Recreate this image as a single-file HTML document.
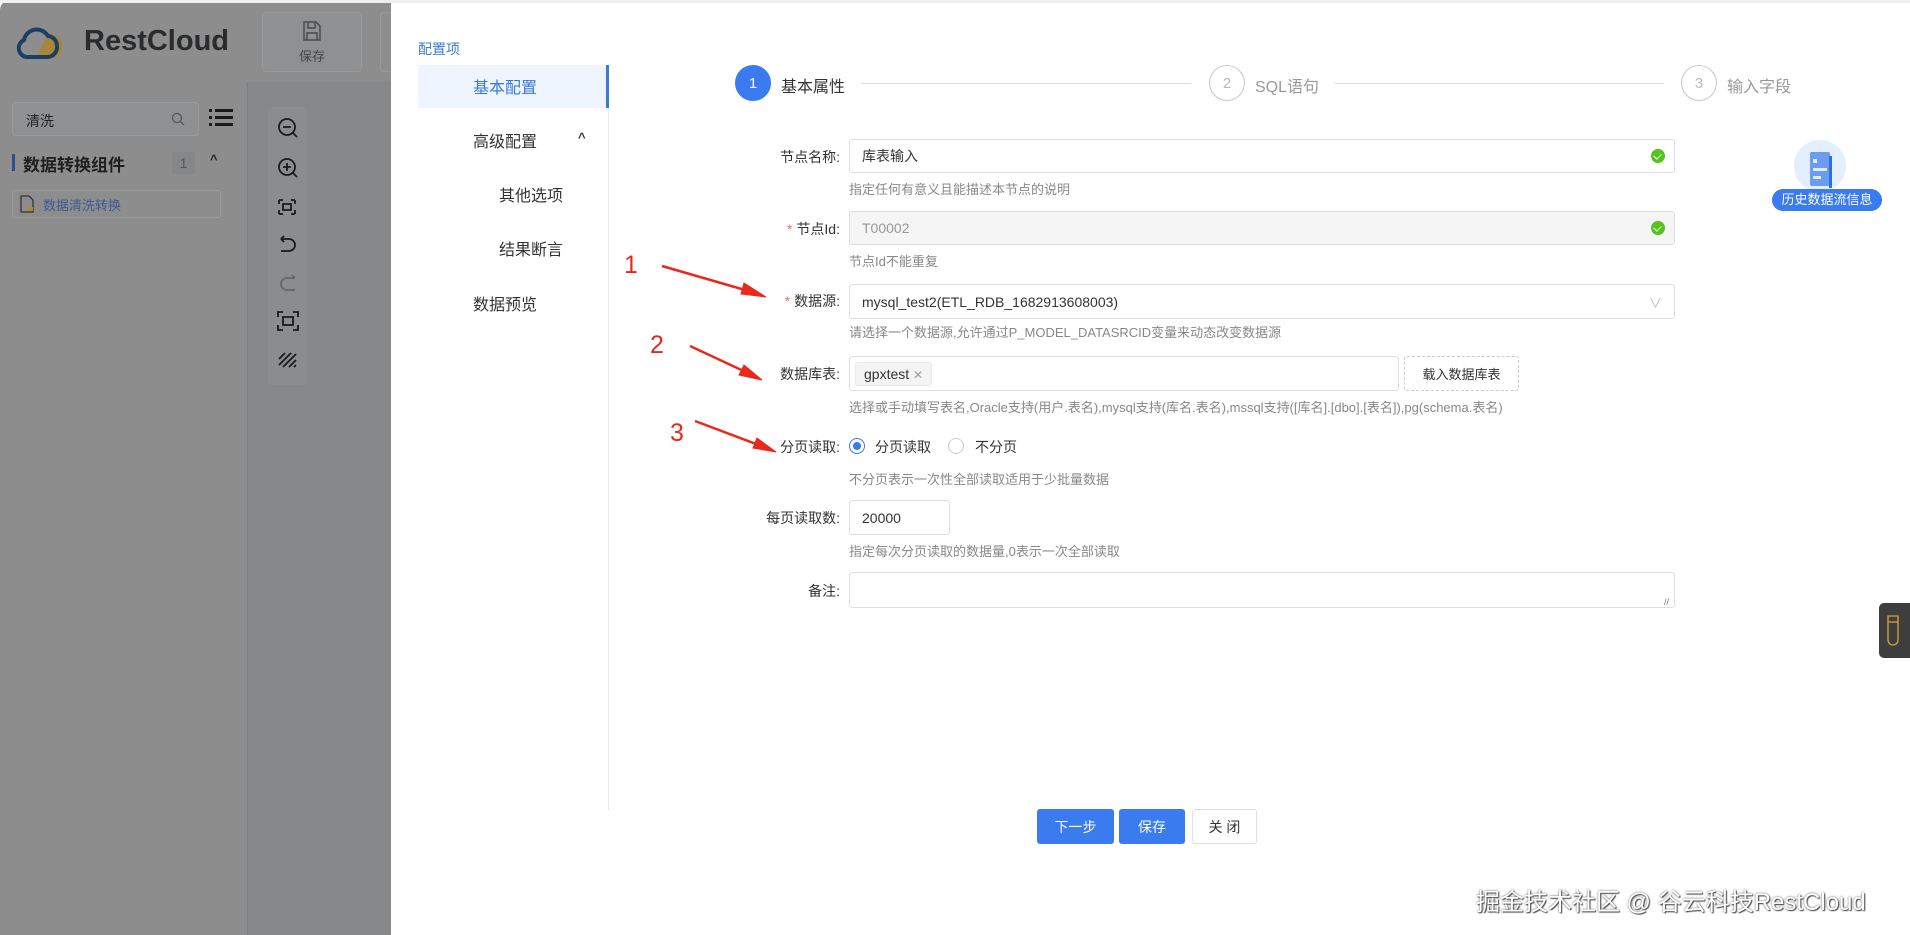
<!DOCTYPE html>
<html><head><meta charset="utf-8"><style>
*{margin:0;padding:0;box-sizing:border-box}
body{width:1910px;height:935px;overflow:hidden;position:relative;background:#fff;font-family:"Liberation Sans","Noto Sans CJK SC",sans-serif;color:#333}
.a{position:absolute}
.lbl{position:absolute;font-size:14px;color:#333;text-align:right;width:200px}
.inp{position:absolute;border:1px solid #dcdfe6;border-radius:3px;background:#fff;font-size:14px;color:#333;padding-left:12px;display:flex;align-items:center}
.hint{position:absolute;font-size:13px;color:#888;left:849px}
.star{color:#f56c6c;margin-right:4px}
.ok{position:absolute;right:9px;top:50%;margin-top:-7px;width:14px;height:14px;border-radius:50%;background:#52c41a}
.ok:after{content:"";position:absolute;left:4px;top:3px;width:4px;height:6px;border:solid #fff;border-width:0 1.5px 1.5px 0;transform:rotate(45deg)}
.menu{position:absolute;font-size:16px;color:#333}
.step{position:absolute;width:36px;height:36px;border-radius:50%;border:1px solid #c8c8c8;color:#bbb;font-size:15px;display:flex;align-items:center;justify-content:center}
.btn{position:absolute;height:35px;border-radius:3px;font-size:14px;display:flex;align-items:center;justify-content:center}
</style></head><body>
<div class="a" style="left:0;top:0;width:391px;height:935px;background:#8d8d8e;border-top-left-radius:10px"></div>
<div class="a" style="left:0;top:0;width:1910px;height:3px;background:#eee"></div>
<div class="a" style="left:247px;top:82px;width:144px;height:853px;background:#87888a;border-left:1px solid #7f8082"></div>
<svg class="a" style="left:14px;top:26px" width="52" height="34" viewBox="0 0 52 34"><path d="M34 8a12 12 0 0 1 14 12a10 10 0 0 1-10 12H22z" fill="#a7863a"/><path d="M12 31a9 9 0 0 1-2-17a13 13 0 0 1 24-4a10 10 0 0 1 9 10a10 10 0 0 1-10 11z" fill="none" stroke="#1b3f63" stroke-width="4"/></svg>
<div class="a" style="left:84px;top:25px;font-size:29px;font-weight:bold;color:#2a2b2c">RestCloud</div>
<div class="a" style="left:262px;top:12px;width:100px;height:60px;border:1px solid #999;border-radius:4px;background:#8f9091"></div>
<svg class="a" style="left:302px;top:20px" width="20" height="22" viewBox="0 0 20 22"><path d="M2 2h12l4 4v14H2z M6 2v6h7V2 M5 20v-7h10v7" fill="none" stroke="#4a4a4a" stroke-width="1.5"/></svg>
<div class="a" style="left:299px;top:46px;font-size:13px;color:#444">保存</div>
<div class="a" style="left:380px;top:12px;width:11px;height:60px;border:1px solid #999;border-right:none;border-radius:4px 0 0 4px"></div>
<div class="a" style="left:12px;top:102px;width:187px;height:34px;border:1px solid #9a9a9a;border-radius:4px;background:#8f9091;font-size:14px;color:#222;padding:8px 13px">清洗</div>
<svg class="a" style="left:171px;top:112px" width="14" height="14"><circle cx="6" cy="6" r="4.5" fill="none" stroke="#555" stroke-width="1.3"/><path d="M9.5 9.5l3.5 3.5" stroke="#555" stroke-width="1.3"/></svg>
<svg class="a" style="left:209px;top:108px" width="24" height="20"><g fill="#1a1a1a"><rect x="0" y="1" width="3" height="3"/><rect x="6" y="1" width="18" height="3"/><rect x="0" y="8" width="3" height="3"/><rect x="6" y="8" width="18" height="3"/><rect x="0" y="15" width="3" height="3"/><rect x="6" y="15" width="18" height="3"/></g></svg>
<div class="a" style="left:12px;top:154px;width:3px;height:17px;background:#2d4f8a"></div>
<div class="a" style="left:23px;top:151px;font-size:17px;font-weight:bold;color:#1f1f1f">数据转换组件</div>
<div class="a" style="left:172px;top:152px;width:23px;height:22px;background:#868788;color:#555;font-size:14px;text-align:center;line-height:22px">1</div>
<div class="a" style="left:210px;top:152px;font-size:13px;color:#222;font-weight:bold">^</div>
<div class="a" style="left:12px;top:190px;width:209px;height:28px;border:1px solid #9a9a9a;border-radius:3px"></div>
<svg class="a" style="left:19px;top:195px" width="16" height="18"><path d="M2 1h8l4 4v12H2z" fill="none" stroke="#333" stroke-width="1.3"/><rect x="8" y="12" width="6" height="4" fill="#b08a2c"/></svg>
<div class="a" style="left:43px;top:195px;font-size:13px;color:#3c5a96">数据清洗转换</div>
<div class="a" style="left:268px;top:107px;width:39px;height:278px;background:#8b8c8e;border-radius:3px"></div>
<svg class="a" style="left:275px;top:114px" width="26" height="270" viewBox="0 0 26 270" fill="none" stroke="#1a1a1a" stroke-width="1.8">
<circle cx="12" cy="13" r="8"/><path d="M8 13h8M18 19l4 4"/>
<circle cx="12" cy="53" r="8"/><path d="M8 53h8M12 49v8M18 59l4 4"/>
<path d="M4 86v4M8 86h-4M4 100v-4M4 100h4M20 86h-4M20 86v4M20 100v-4M20 100h-4M8 90h8v6h-8z"/>
<path d="M6 125h8a6 6 0 0 1 0 12h-8M6 125l3-3M6 125l3 3" />
<path d="M20 164h-8a6 6 0 0 0 0 12h8M20 164l-3-3" stroke="#666"/>
<path d="M3 203v-5h5M23 203v-5h-5M3 211v5h5M23 211v5h-5M8 203h10v8h-10z"/>
<path d="M4 245l6-6M4 251l12-12M8 253l13-13M14 253l7-7M19 253l2-2"/>
</svg>

<div class="a" style="left:418px;top:39px;font-size:14px;color:#3a7bd5">配置项</div>
<div class="a" style="left:418px;top:65px;width:191px;height:43px;background:#eef5ff;border-right:3px solid #3a7bd5"></div>
<div class="menu" style="left:473px;top:74px;color:#3a7bd5">基本配置</div>
<div class="menu" style="left:473px;top:128px">高级配置</div>
<div class="a" style="left:578px;top:130px;font-size:13px;font-weight:bold">^</div>
<div class="menu" style="left:499px;top:182px">其他选项</div>
<div class="menu" style="left:499px;top:236px">结果断言</div>
<div class="menu" style="left:473px;top:291px">数据预览</div>
<div class="a" style="left:608px;top:108px;width:1px;height:702px;background:#e8e8e8"></div>

<div class="step" style="left:735px;top:65px;background:#3a7bf0;border-color:#3a7bf0;color:#fff">1</div>
<div class="a" style="left:781px;top:73px;font-size:16px;color:#333">基本属性</div>
<div class="a" style="left:861px;top:83px;width:330px;height:1px;background:#ddd"></div>
<div class="step" style="left:1209px;top:65px">2</div>
<div class="a" style="left:1255px;top:73px;font-size:16px;color:#999">SQL语句</div>
<div class="a" style="left:1334px;top:83px;width:330px;height:1px;background:#ddd"></div>
<div class="step" style="left:1681px;top:65px">3</div>
<div class="a" style="left:1727px;top:73px;font-size:16px;color:#999">输入字段</div>

<div class="lbl" style="left:640px;top:147px">节点名称:</div>
<div class="inp" style="left:849px;top:139px;width:826px;height:34px">库表输入<span class="ok"></span></div>
<div class="hint" style="top:179px">指定任何有意义且能描述本节点的说明</div>

<div class="lbl" style="left:640px;top:219px"><span class="star">*</span>节点Id:</div>
<div class="inp" style="left:849px;top:211px;width:826px;height:34px;background:#f5f5f5;color:#999">T00002<span class="ok"></span></div>
<div class="hint" style="top:251px">节点Id不能重复</div>

<div class="lbl" style="left:640px;top:291px"><span class="star">*</span>数据源:</div>
<div class="inp" style="left:849px;top:284px;width:826px;height:35px">mysql_test2(ETL_RDB_1682913608003)<span class="a" style="right:12px;top:8px;color:#bbb;font-size:13px">∨</span></div>
<div class="hint" style="top:322px">请选择一个数据源,允许通过P_MODEL_DATASRCID变量来动态改变数据源</div>

<div class="lbl" style="left:640px;top:364px">数据库表:</div>
<div class="inp" style="left:849px;top:356px;width:550px;height:35px;padding-left:5px"><span style="background:#f4f4f5;border:1px solid #e9e9eb;border-radius:3px;padding:3px 8px;font-size:14px">gpxtest <span style="color:#999;font-size:12px">✕</span></span></div>
<div class="a" style="left:1404px;top:356px;width:115px;height:35px;border:1px dashed #ccc;border-radius:3px;font-size:13px;display:flex;align-items:center;justify-content:center">载入数据库表</div>
<div class="hint" style="top:397px">选择或手动填写表名,Oracle支持(用户.表名),mysql支持(库名.表名),mssql支持([库名].[dbo].[表名]),pg(schema.表名)</div>

<div class="lbl" style="left:640px;top:437px">分页读取:</div>
<div class="a" style="left:849px;top:438px;width:16px;height:16px;border-radius:50%;border:1px solid #3a7bf0"></div>
<div class="a" style="left:853px;top:442px;width:8px;height:8px;border-radius:50%;background:#3a7bf0"></div>
<div class="a" style="left:875px;top:437px;font-size:14px">分页读取</div>
<div class="a" style="left:948px;top:438px;width:16px;height:16px;border-radius:50%;border:1px solid #ccc"></div>
<div class="a" style="left:975px;top:437px;font-size:14px">不分页</div>
<div class="hint" style="top:469px">不分页表示一次性全部读取适用于少批量数据</div>

<div class="lbl" style="left:640px;top:508px">每页读取数:</div>
<div class="inp" style="left:849px;top:500px;width:101px;height:35px">20000</div>
<div class="hint" style="top:541px">指定每次分页读取的数据量,0表示一次全部读取</div>

<div class="lbl" style="left:640px;top:581px">备注:</div>
<div class="inp" style="left:849px;top:572px;width:826px;height:36px"></div>
<div class="a" style="left:1664px;top:597px;font-size:9px;color:#777">//</div>

<div class="btn" style="left:1037px;top:809px;width:77px;background:#3a7bf0;color:#fff">下一步</div>
<div class="btn" style="left:1119px;top:809px;width:66px;background:#3a7bf0;color:#fff">保存</div>
<div class="btn" style="left:1192px;top:809px;width:65px;border:1px solid #dcdfe6;color:#333">关 闭</div>

<div class="a" style="left:1794px;top:140px;width:52px;height:52px;border-radius:50%;background:#e3eeff"></div>
<div class="a" style="left:1810px;top:152px;width:20px;height:34px;background:#6a9cf2;border-radius:2px"></div>
<div class="a" style="left:1813px;top:159px;width:4px;height:4px;background:#fff;opacity:.8"></div>
<div class="a" style="left:1813px;top:168px;width:14px;height:3px;background:#fff;opacity:.8"></div>
<div class="a" style="left:1813px;top:176px;width:8px;height:3px;background:#fff;opacity:.8"></div>
<div class="a" style="left:1829px;top:156px;width:3px;height:32px;background:#2f6fe0"></div>
<div class="a" style="left:1772px;top:189px;width:110px;height:22px;border-radius:11px;background:#3a7bf0;color:#fff;font-size:13px;text-align:center;line-height:22px">历史数据流信息</div>
<div class="a" style="left:1879px;top:603px;width:31px;height:55px;background:#3e3e3e;border-radius:5px 0 0 5px"></div>
<svg class="a" style="left:1886px;top:614px" width="14" height="32"><path d="M2 2h10v6H2z M2 8v18a5 5 0 0 0 10 0V8" fill="none" stroke="#d9a53a" stroke-width="1.3"/></svg>

<div class="a" style="left:624px;top:251px;font-size:25px;color:#e8291c">1</div>
<div class="a" style="left:650px;top:331px;font-size:25px;color:#e8291c">2</div>
<div class="a" style="left:670px;top:419px;font-size:25px;color:#e8291c">3</div>
<svg class="a" style="left:0;top:0" width="1910" height="935">
<g fill="#e8291c" stroke="#e8291c">
<path d="M662 266L752 292" stroke-width="2.5"/><path d="M766 297l-22-14l-3 11z"/>
<path d="M690 346L750 374" stroke-width="2.5"/><path d="M762 380l-18-15l-5 10z"/>
<path d="M695 421L764 447" stroke-width="2.5"/><path d="M776 452l-19-14l-4 10z"/>
</g></svg>

<div class="a" style="left:1476px;top:882px;font-size:24px;color:#fff;text-shadow:0 0 2px #555,1px 1px 1px #444;white-space:nowrap">掘金技术社区 @ 谷云科技RestCloud</div>
</body></html>
